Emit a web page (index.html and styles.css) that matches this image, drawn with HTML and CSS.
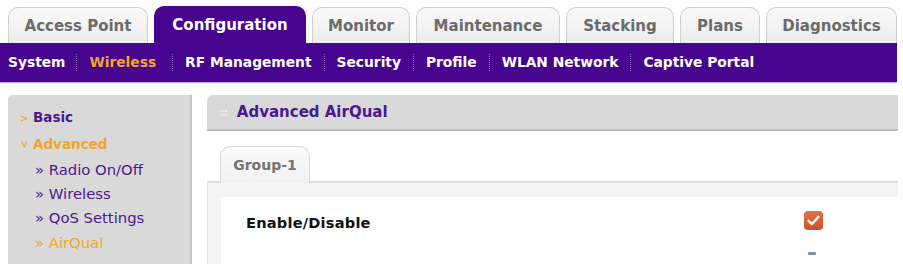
FILE: index.html
```html
<!DOCTYPE html>
<html>
<head>
<meta charset="utf-8">
<link rel="stylesheet" href="styles.css">
</head>
<body>
<div class="tabs">
  <div class="tab t-ap">Access Point</div>
  <div class="tab t-conf active">Configuration</div>
  <div class="tab t-mon">Monitor</div>
  <div class="tab t-maint">Maintenance</div>
  <div class="tab t-stack">Stacking</div>
  <div class="tab t-plans">Plans</div>
  <div class="tab t-diag">Diagnostics</div>
</div>
<div class="subnav">
  <span class="sub">System</span>
  <span class="sub current">Wireless</span>
  <span class="sub">RF Management</span>
  <span class="sub">Security</span>
  <span class="sub">Profile</span>
  <span class="sub">WLAN Network</span>
  <span class="sub">Captive Portal</span>
</div>
<div class="layout">
  <div class="sidebar">
    <div class="sec"><span class="arr">&gt;</span>Basic</div>
    <div class="sec open"><span class="arr down">&gt;</span>Advanced</div>
    <div class="item">» Radio On/Off</div>
    <div class="item">» Wireless</div>
    <div class="item">» QoS Settings</div>
    <div class="item sel">» AirQual</div>
  </div>
  <div class="main">
    <div class="head"><span class="grip">::</span>Advanced AirQual</div>
    <div class="gtabs">
      <div class="gtab">Group-1</div>
    </div>
    <div class="panel">
      <div class="box">
        <div class="row">
          <div class="label">Enable/Disable</div>
          <div class="cb on"><svg width="13" height="11" viewBox="0 0 13 11"><path d="M1.5 5.8 L5 9 L11.5 1.8" fill="none" stroke="#fff" stroke-width="2.4" stroke-linecap="round" stroke-linejoin="round"/></svg></div>
        </div>
        <div class="row">
          <div class="label"></div>
          <div class="cb off"></div>
        </div>
      </div>
    </div>
  </div>
</div>
</body>
</html>
```
FILE: styles.css
```css
html, body { margin: 0; padding: 0; background: #fff; overflow: hidden; }
body { font-family: "DejaVu Sans", Verdana, sans-serif; width: 903px; height: 264px; }

.tabs { display: flex; align-items: flex-end; gap: 6px; padding-left: 8px; height: 43px; }
.tab {
  flex: none; white-space: nowrap;
  height: 36px; box-sizing: border-box; padding: 0;
  display: flex; align-items: center; justify-content: center;
  font-weight: bold; font-size: 15px; color: #6b6b6b;
  background: linear-gradient(#fafafa, #ececec);
  border: 1px solid #cfcfcf; border-bottom: none;
  border-radius: 10px 10px 0 0;
}
.tab.active { height: 37px; background: #47048f; border-color: #47048f; color: #fff; }
.t-ap { width: 140px; }
.t-conf { width: 152px; }
.t-mon { width: 98px; }
.t-maint { width: 144px; }
.t-stack { width: 108px; }
.t-plans { width: 80px; }
.t-diag { width: 131px; }

.subnav {
  display: flex; align-items: center; height: 39px; margin-right: 6px;
  background: #47048f; box-shadow: 0 1px 1px #b9a8cc;
}
.sub { white-space: nowrap; font-weight: bold; font-size: 13.8px; color: #fff; padding: 0 12px; border-left: 1px dotted #8d6cbc; line-height: 17px; }
.sub:first-child { border-left: none; padding-left: 8px; padding-right: 11px; }
.sub.current { color: #f5a524; padding-right: 16px; }

.layout { display: flex; margin-top: 13px; padding-left: 8px; gap: 15px; height: 169px; overflow: hidden; }
.sidebar {
  width: 184px; height: 200px; box-sizing: border-box; flex: none;
  background: #d9d9d9; border-right: 2px solid #c4c4c4; border-radius: 5px 0 0 0;
  padding-top: 13px;
}
.sec { font-weight: bold; font-size: 13.5px; color: #4b1890; height: 17px; display: flex; align-items: center; padding-left: 12px; }
.sec:first-child { margin-bottom: 10px; }
.sec.open { color: #f0a52c; margin-bottom: 5px; }
.arr { color: #f0a52c; font-size: 10px; width: 13px; display: inline-block; position: relative; top: 2px; }
.arr.down { transform: rotate(90deg); width: 9px; margin-right: 4px; text-align: center; top: 1px; }
.item { font-size: 14.8px; color: #4b1890; padding-left: 27px; height: 24.3px; display: flex; align-items: center; }
.item.sel { color: #f0a52c; }

.main { flex: 1; margin-right: 5px; }
.head {
  height: 34px; background: #d9d9d9; border-bottom: 2px solid #bdbdbd; border-radius: 6px 0 0 0;
  display: flex; align-items: center; padding-left: 13px;
  font-weight: bold; font-size: 15px; color: #4b1890;
}
.grip { color: #efefef; font-size: 11px; margin-right: 10px; letter-spacing: -1px; }
.gtabs { display: flex; padding: 15px 0 0 13px; border-bottom: 2px solid #dcdcdc; }
.gtab {
  width: 90px; height: 37px; box-sizing: border-box; display: flex; align-items: center; justify-content: center;
  font-weight: bold; font-size: 14px; color: #727272;
  background: linear-gradient(#fbfbfb, #f0f0f0); border: 1px solid #dadada; border-bottom: none;
  border-radius: 10px 10px 0 0; margin-bottom: -2px;
}
.panel { background: #f4f4f4; padding: 14px 0 0 13px; border-left: 1px solid #e4e4e4; }
.box { background: #fff; padding-left: 25px; padding-top: 2px; }
.row { display: flex; align-items: center; height: 43px; }
.label { font-weight: bold; font-size: 14.6px; color: #111; width: 558px; letter-spacing: 0.2px; position: relative; top: 2px; }
.cb { width: 19px; height: 19px; box-sizing: border-box; border-radius: 4px; display: flex; align-items: center; justify-content: center; }
.cb.on { background: linear-gradient(#e0733e, #c9532a); }
.cb.off { align-self: flex-start; margin-top: 10px; margin-left: 4px; width: 8px; height: 3px; border-radius: 1px; background: #7d8fb3; }
```
